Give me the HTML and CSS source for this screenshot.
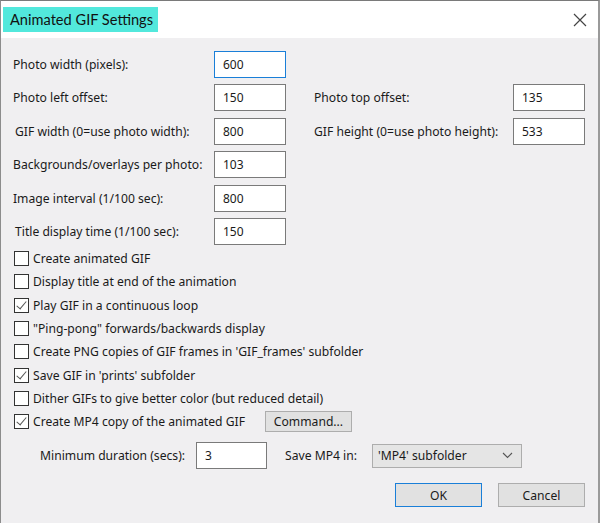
FILE: index.html
```html
<!DOCTYPE html>
<html>
<head>
<meta charset="utf-8">
<link rel="stylesheet" href="styles.css">
</head>
<body>
<div class="window">
  <div class="titlebar">
    <span class="title">Animated GIF Settings</span>
    <span class="close" aria-label="Close">
      <svg width="14" height="14" viewBox="0 0 14 14"><path d="M1 1 L13 13 M13 1 L1 13" stroke="#444" stroke-width="1.2" fill="none"/></svg>
    </span>
  </div>
  <div class="content">
    <div class="fields">
      <span class="lbl">Photo width (pixels):</span>
      <span class="inp focus">600</span>
      <span></span><span></span><span></span>

      <span class="lbl">Photo left offset:</span>
      <span class="inp">150</span>
      <span></span>
      <span class="lbl">Photo top offset:</span>
      <span class="inp">135</span>

      <span class="lbl ind">GIF width (0=use photo width):</span>
      <span class="inp">800</span>
      <span></span>
      <span class="lbl">GIF height (0=use photo height):</span>
      <span class="inp">533</span>

      <span class="lbl">Backgrounds/overlays per photo:</span>
      <span class="inp">103</span>
      <span></span><span></span><span></span>

      <span class="lbl">Image interval (1/100 sec):</span>
      <span class="inp">800</span>
      <span></span><span></span><span></span>

      <span class="lbl ind">Title display time (1/100 sec):</span>
      <span class="inp">150</span>
      <span></span><span></span><span></span>
    </div>

    <div class="checks">
      <div class="chk"><span class="box"></span>Create animated GIF</div>
      <div class="chk"><span class="box"></span>Display title at end of the animation</div>
      <div class="chk"><span class="box on"></span>Play GIF in a continuous loop</div>
      <div class="chk"><span class="box"></span>"Ping-pong" forwards/backwards display</div>
      <div class="chk"><span class="box"></span>Create PNG copies of GIF frames in 'GIF_frames' subfolder</div>
      <div class="chk"><span class="box on"></span>Save GIF in 'prints' subfolder</div>
      <div class="chk"><span class="box"></span>Dither GIFs to give better color (but reduced detail)</div>
      <div class="chk mp4"><span class="box on"></span>Create MP4 copy of the animated GIF<span class="btn cmd">Command...</span></div>
    </div>

    <div class="mp4row">
      <span class="lbl mindur">Minimum duration (secs):</span>
      <span class="inp small">3</span>
      <span class="lbl savein">Save MP4 in:</span>
      <span class="select">'MP4' subfolder
        <svg class="chev" width="11" height="7" viewBox="0 0 11 7"><path d="M1 1 L5.5 5.5 L10 1" stroke="#555" stroke-width="1.1" fill="none"/></svg>
      </span>
    </div>

    <div class="actions">
      <span class="btn ok">OK</span>
      <span class="btn">Cancel</span>
    </div>
  </div>
</div>
</body>
</html>
```

FILE: styles.css
```css
* { box-sizing: border-box; }
html, body { margin: 0; padding: 0; background: #f0eff1; }
body {
  font-family: "Noto Sans", "Liberation Sans", sans-serif;
  font-size: 12.15px;
  color: #1a1a1a;
}
.window {
  width: 600px;
  height: 523px;
  border-left: 1px solid #8c8c8c;
  border-top: 1px solid #7a7a7a;
  border-right: 2px solid #9a9a9a;
  background: #f0eff1;
  display: flex;
  flex-direction: column;
}
.titlebar {
  height: 37px;
  background: #ffffff;
  display: flex;
  align-items: center;
  justify-content: space-between;
  padding: 0 11px 0 2px;
}
.title {
  background: #52e8dc;
  height: 25px;
  padding: 0 5px 0 7px;
  display: flex;
  align-items: center;
  font-family: Lato, "Noto Sans", sans-serif;
  font-size: 14.6px;
  color: #111;
}
.close { display: flex; margin-top: 0; }
.content {
  flex: 1;
  padding: 13px 13px 0 12px;
  display: flex;
  flex-direction: column;
}
.fields {
  display: grid;
  grid-template-columns: 201px 72px 28px 199px 72px;
  grid-auto-rows: 27px;
  row-gap: 6.4px;
  align-items: center;
}
.lbl { white-space: nowrap; }
.ind { padding-left: 2px; }
.inp {
  height: 27px;
  border: 1px solid #7a7a7a;
  background: #fff;
  display: flex;
  align-items: center;
  padding-left: 8px;
  font-size: 12px;
}
.inp.focus { border: 1.5px solid #1a7fd8; }
.checks {
  margin-top: 2px;
  display: flex;
  flex-direction: column;
}
.chk {
  height: 23.3px;
  display: flex;
  align-items: center;
  padding-left: 1px;
  white-space: nowrap;
}
.box {
  width: 15px;
  height: 15px;
  border: 1px solid #333;
  background: #fff;
  margin-right: 4px;
  position: relative;
  flex: none;
}
.box.on::after {
  content: "";
  position: absolute;
  left: 4px;
  top: 0px;
  width: 4px;
  height: 9px;
  border-right: 1.3px solid #555;
  border-bottom: 1.3px solid #555;
  transform: rotate(40deg);
}
.btn {
  display: inline-flex;
  align-items: center;
  justify-content: center;
  background: #e1e1e1;
  border: 1px solid #adadad;
  height: 24px;
  width: 87px;
}
.cmd {
  margin-left: 20px;
  height: 21px;
  width: 87px;
}
.mp4row {
  margin-top: 9px;
  display: flex;
  align-items: center;
  padding-left: 27px;
}
.mindur { width: 156px; }
.inp.small { width: 71px; }
.savein { margin-left: 18px; width: 87px; }
.select {
  width: 150px;
  height: 24px;
  border: 1px solid #adadad;
  background: #e5e5e5;
  display: flex;
  align-items: center;
  justify-content: space-between;
  padding: 0 8px 0 5px;
}
.actions {
  margin-top: 14px;
  display: flex;
  justify-content: flex-end;
  gap: 16px;
  padding-right: 0;
}
.btn.ok { border: 1.5px solid #1a7fd8; }
```
